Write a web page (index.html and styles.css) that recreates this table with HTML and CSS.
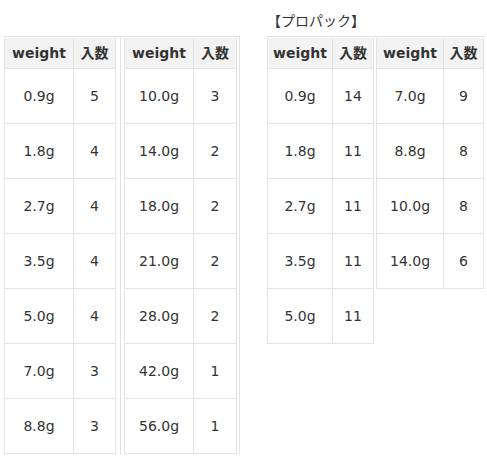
FILE: index.html
```html
<!DOCTYPE html>
<html lang="ja">
<head>
<meta charset="utf-8">
<title>weight 入数</title>
<link rel="stylesheet" href="styles.css">
</head>
<body>
<div class="page">
  <section class="col col-left">
    <div class="caption"></div>
    <div class="group group-left">
      <div class="tw tw-a">
        <table class="t">
          <tr><th class="w68">weight</th><th class="w41">入数</th></tr>
          <tr><td>0.9g</td><td>5</td></tr>
          <tr><td>1.8g</td><td>4</td></tr>
          <tr><td>2.7g</td><td>4</td></tr>
          <tr><td>3.5g</td><td>4</td></tr>
          <tr><td>5.0g</td><td>4</td></tr>
          <tr><td>7.0g</td><td>3</td></tr>
          <tr><td>8.8g</td><td>3</td></tr>
        </table>
      </div>
      <div class="tw tw-b">
        <table class="t">
          <tr><th class="w68">weight</th><th class="w42">入数</th></tr>
          <tr><td>10.0g</td><td>3</td></tr>
          <tr><td>14.0g</td><td>2</td></tr>
          <tr><td>18.0g</td><td>2</td></tr>
          <tr><td>21.0g</td><td>2</td></tr>
          <tr><td>28.0g</td><td>2</td></tr>
          <tr><td>42.0g</td><td>1</td></tr>
          <tr><td>56.0g</td><td>1</td></tr>
        </table>
      </div>
    </div>
  </section>
  <section class="col col-right">
    <div class="caption">【プロパック】</div>
    <div class="group group-right">
      <div class="tw tw-c">
        <table class="t">
          <tr><th class="w64">weight</th><th class="w40">入数</th></tr>
          <tr><td>0.9g</td><td>14</td></tr>
          <tr><td>1.8g</td><td>11</td></tr>
          <tr><td>2.7g</td><td>11</td></tr>
          <tr><td>3.5g</td><td>11</td></tr>
          <tr><td>5.0g</td><td>11</td></tr>
        </table>
      </div>
      <div class="tw tw-d">
        <table class="t">
          <tr><th class="w66">weight</th><th class="w39">入数</th></tr>
          <tr><td>7.0g</td><td>9</td></tr>
          <tr><td>8.8g</td><td>8</td></tr>
          <tr><td>10.0g</td><td>8</td></tr>
          <tr><td>14.0g</td><td>6</td></tr>
        </table>
      </div>
    </div>
  </section>
</div>
</body>
</html>
```

FILE: styles.css
```css
body {
  margin: 0;
  background: #fff;
  color: #333;
  font-family: "DejaVu Sans", "Noto Sans CJK JP", sans-serif;
  font-size: 14px;
}

.page {
  display: flex;
  align-items: flex-start;
  gap: 27px;
  padding-left: 4px;
}

.col-left {
  width: 236px;
}

.caption {
  height: 36px;
  box-sizing: border-box;
  padding-top: 7px;
  line-height: 29px;
  white-space: nowrap;
}

.group {
  display: flex;
  align-items: stretch;
  border-top: 1px solid #e3e3e3;
}

.group-right {
  align-items: flex-start;
}

.tw {
  padding-top: 1px;
}

.tw-a {
  padding-right: 4px;
  border-right: 1px solid #e3e3e3;
}

.tw-b {
  padding-left: 3px;
  padding-right: 2px;
  padding-bottom: 1px;
  border-right: 1px solid #e3e3e3;
}

.tw-c {
  padding-right: 2px;
}

.t {
  border-collapse: separate;
  border-spacing: 0;
  border-left: 1px solid #e3e3e3;
}

.t th,
.t td {
  padding: 0;
  text-align: center;
  vertical-align: middle;
  border-right: 1px solid #e3e3e3;
  border-bottom: 1px solid #e3e3e3;
  white-space: nowrap;
}

.t th {
  background: #f3f3f3;
  font-weight: bold;
  line-height: 30px;
}

.t td {
  line-height: 54px;
}

.w68 { width: 68px; }
.w42 { width: 42px; }
.w41 { width: 41px; }
.w40 { width: 40px; }
.w39 { width: 39px; }
.w64 { width: 64px; }
.w66 { width: 66px; }
```
